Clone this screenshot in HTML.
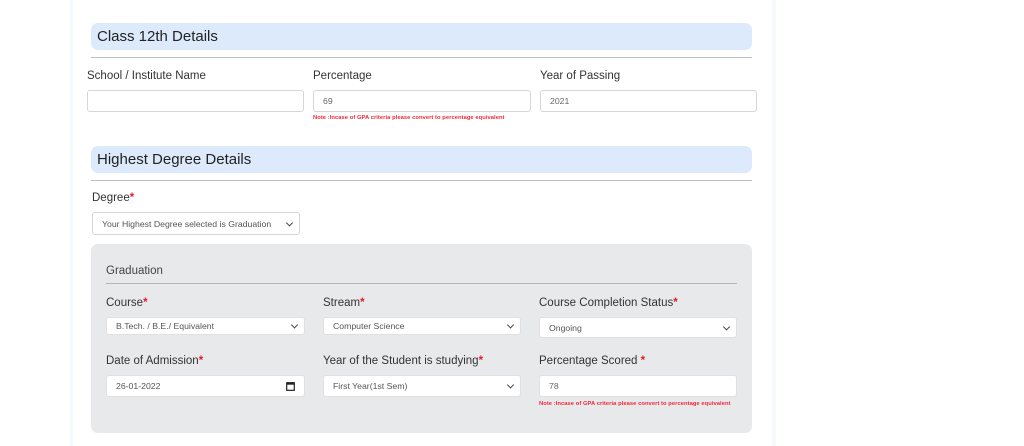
<!DOCTYPE html>
<html><head><meta charset="utf-8"><style>
*{box-sizing:border-box;margin:0;padding:0}
body{width:1024px;height:446px;background:#fff;font-family:"Liberation Sans",Arial,sans-serif;position:relative;overflow:hidden;color:#333}
.a{position:absolute}
.card{left:70px;top:0;width:706px;height:446px;border-left:3px solid #f5f9fe;border-right:4px solid #f5f9fe}
.hd{background:#dceafc;border-radius:7px;height:27px;font-size:15px;color:#222;padding-left:6px;line-height:27px}
.hr{height:1px;background:#bdbdbd}
.lb{font-size:11.5px;color:#333;white-space:nowrap;margin-top:2px}
.st{color:#e0202a;font-weight:bold}
.in{background:#fff;border:1px solid #d6d6d6;border-radius:3px;font-size:8.7px;color:#555;padding-left:9px;display:flex;align-items:center}
.note{font-size:5.8px;color:#f0283a;font-weight:bold;white-space:nowrap;letter-spacing:0.05px}
.chev{position:absolute;right:7px;top:50%;width:5px;height:5px;border-right:1.2px solid #444;border-bottom:1.2px solid #444;transform:translateY(-70%) rotate(45deg)}
</style></head><body>
<div class="a card"></div>
<div class="a hd" style="left:91px;top:23px;width:661px">Class 12th Details</div>
<div class="a hr" style="left:91px;top:57px;width:661px"></div>
<div class="a lb" style="left:87px;top:68px">School / Institute Name</div>
<div class="a lb" style="left:313px;top:68px">Percentage</div>
<div class="a lb" style="left:540px;top:68px">Year of Passing</div>
<div class="a in" style="left:87px;top:90px;width:217px;height:22px"></div>
<div class="a in" style="left:313px;top:90px;width:218px;height:22px;color:#666">69</div>
<div class="a in" style="left:540px;top:90px;width:217px;height:22px;color:#666">2021</div>
<div class="a note" style="left:313px;top:115px">Note :Incase of GPA criteria please convert to percentage equivalent</div>

<div class="a hd" style="left:91px;top:146px;width:661px">Highest Degree Details</div>
<div class="a hr" style="left:91px;top:180px;width:661px"></div>
<div class="a lb" style="left:92px;top:190px">Degree<span class="st">*</span></div>
<div class="a in" style="left:92px;top:212px;width:208px;height:23px">Your Highest Degree selected is Graduation<i class="chev"></i></div>

<div class="a" style="left:91px;top:244px;width:661px;height:189px;background:#e8e9eb;border-radius:7px"></div>
<div class="a lb" style="left:106px;top:263px;font-size:11.5px;color:#444">Graduation</div>
<div class="a hr" style="left:106px;top:283px;width:631px;background:#b5b5b5"></div>
<div class="a lb" style="left:106px;top:295px">Course<span class="st">*</span></div>
<div class="a lb" style="left:323px;top:295px">Stream<span class="st">*</span></div>
<div class="a lb" style="left:539px;top:295px">Course Completion Status<span class="st">*</span></div>
<div class="a in" style="left:106px;top:317px;width:199px;height:18px;border-color:#e0e0e0">B.Tech. / B.E./ Equivalent<i class="chev"></i></div>
<div class="a in" style="left:323px;top:317px;width:198px;height:18px;border-color:#e0e0e0">Computer Science<i class="chev"></i></div>
<div class="a in" style="left:539px;top:317px;width:198px;height:21px;border-color:#e0e0e0">Ongoing<i class="chev"></i></div>
<div class="a lb" style="left:106px;top:353px">Date of Admission<span class="st">*</span></div>
<div class="a lb" style="left:323px;top:353px">Year of the Student is studying<span class="st">*</span></div>
<div class="a lb" style="left:539px;top:353px">Percentage Scored <span class="st">*</span></div>
<div class="a in" style="left:106px;top:375px;width:199px;height:22px;border-color:#e0e0e0">26-01-2022
<svg style="position:absolute;right:9px;top:6px" width="9" height="9" viewBox="0 0 9 9"><rect x="0.7" y="0.7" width="7.6" height="7.6" fill="none" stroke="#222" stroke-width="1.2"/><rect x="0.7" y="0.7" width="7.6" height="2" fill="#222"/></svg></div>
<div class="a in" style="left:323px;top:375px;width:198px;height:22px;border-color:#e0e0e0">First Year(1st Sem)<i class="chev"></i></div>
<div class="a in" style="left:539px;top:375px;width:198px;height:22px;border-color:#e0e0e0;color:#666">78</div>
<div class="a note" style="left:539px;top:401px">Note :Incase of GPA criteria please convert to percentage equivalent</div>
</body></html>
